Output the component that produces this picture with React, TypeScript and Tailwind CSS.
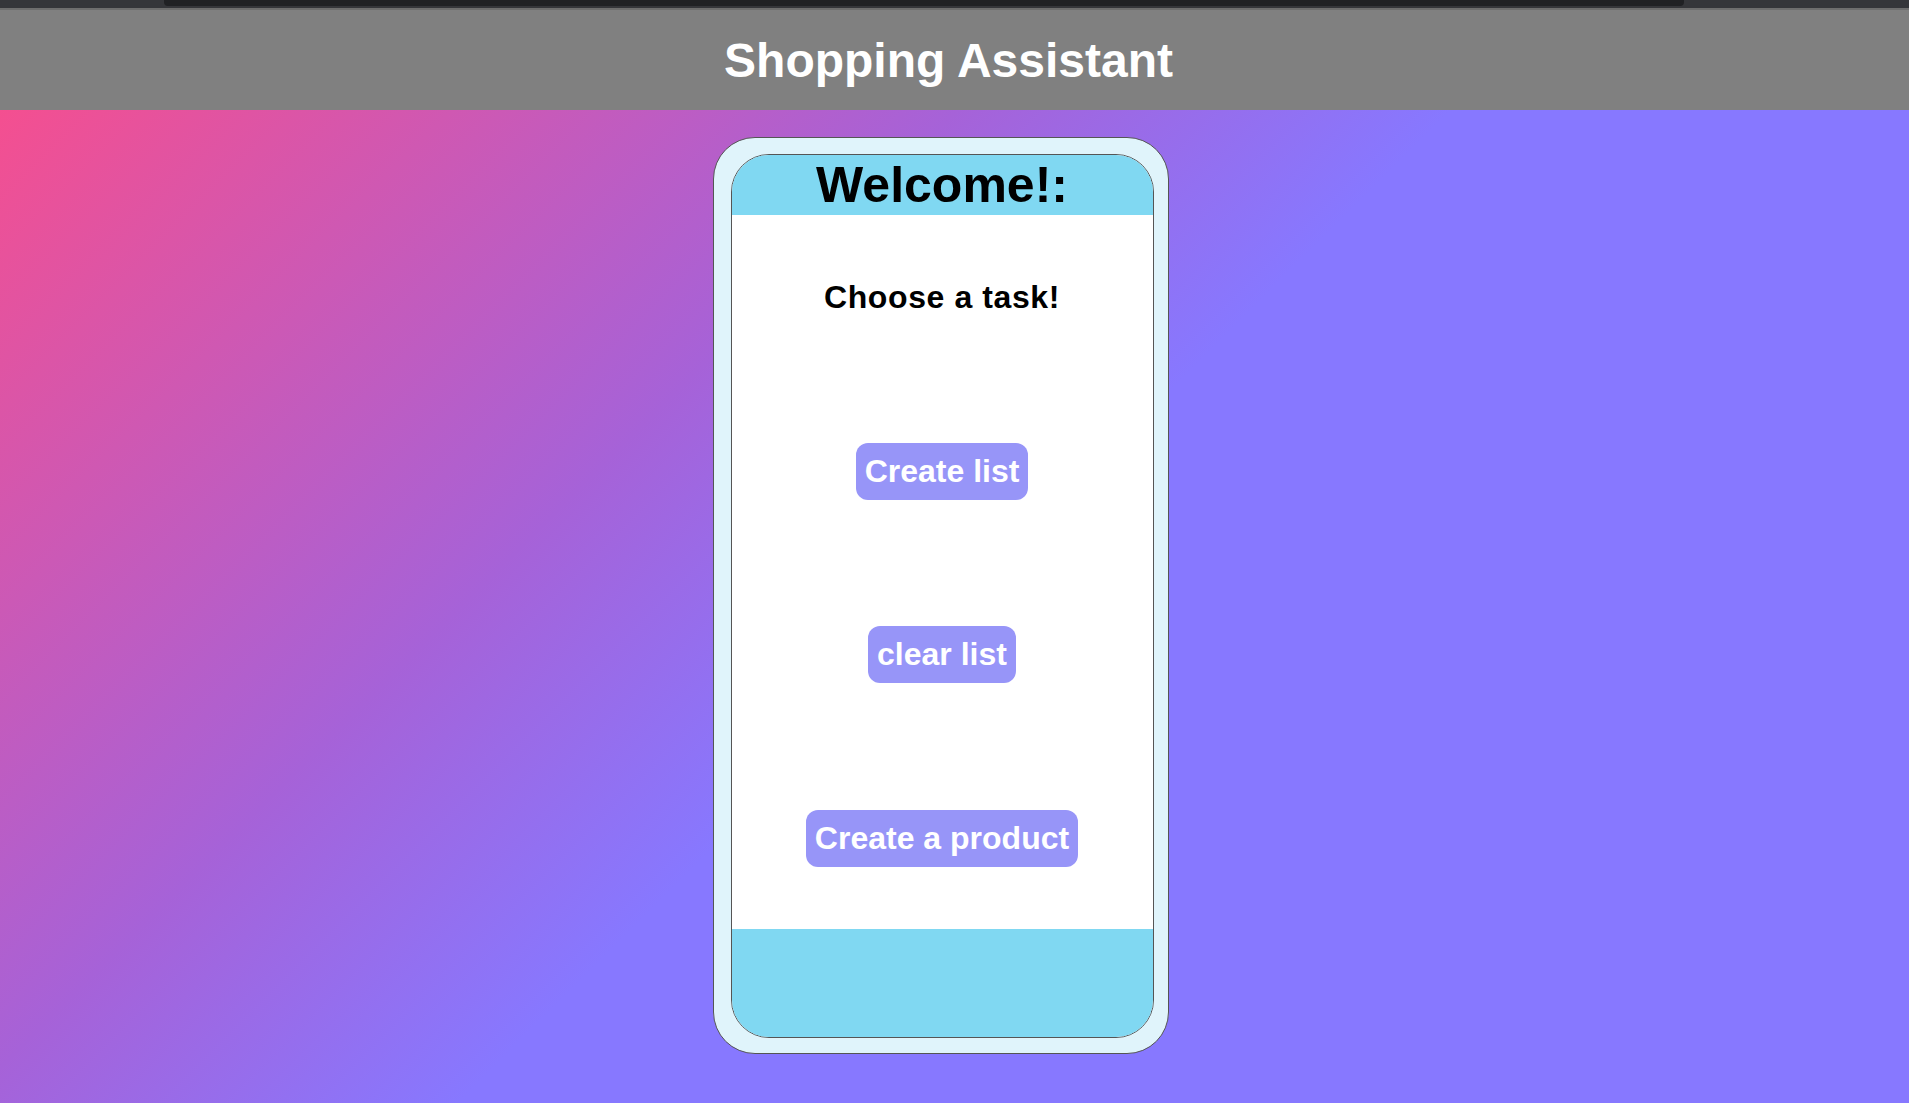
export default function App() {
  const font = { fontFamily: '"Liberation Sans", Arial, sans-serif' };

  return (
    <div className="min-h-screen w-full" style={font}>
      <div className="h-[8px] bg-[#35363a] pl-[164px] pr-[225px]">
        <div className="h-[6px] rounded-b-[4px] bg-[#202124]" />
      </div>
      <div className="h-[2px] bg-[#6e6e6e]" />
      <header className="flex h-[100px] items-center justify-center bg-[#808080] pr-[12px]">
        <h1 className="text-[48px] font-bold leading-[55px] text-white">Shopping Assistant</h1>
      </header>

      <main className="flex min-h-[993px] justify-center bg-[linear-gradient(135deg,#f44f90_0%,#a662d8_33%,#8778ff_50%,#8778ff_100%)] pb-[49px] pr-[28px] pt-[27px]">
        <div className="h-[917px] w-[456px] rounded-[42px] border border-[#555] bg-[#e0f4fb] pb-[15px] pl-[17px] pr-[14px] pt-[16px]">
          <div className="flex h-full flex-col overflow-hidden rounded-[38px] border border-[#555] bg-white">
            <div className="flex h-[60px] shrink-0 items-center justify-center bg-[#80d8f2]">
              <h2 className="text-[50px] font-bold leading-[55px] text-black">Welcome!:</h2>
            </div>

            <div className="flex h-[714px] shrink-0 flex-col items-center">
              <p className="mt-[64px] text-[32px] font-bold leading-[37px] tracking-[0.6px] text-black">
                Choose a task!
              </p>
              <TaskButton className="mt-[127px]">Create list</TaskButton>
              <TaskButton className="mt-[126px]">clear list</TaskButton>
              <TaskButton className="mt-[127px]">Create a product</TaskButton>
            </div>

            <div className="flex-1 bg-[#80d8f2]" />
          </div>
        </div>
      </main>
    </div>
  );
}

function TaskButton({ children, className }: { children: string; className: string }) {
  return (
    <button
      className={`${className} rounded-[12px] bg-[#9795f8] px-[9px] py-[10px] text-[32px] font-bold leading-[37px] text-white`}
    >
      {children}
    </button>
  );
}
